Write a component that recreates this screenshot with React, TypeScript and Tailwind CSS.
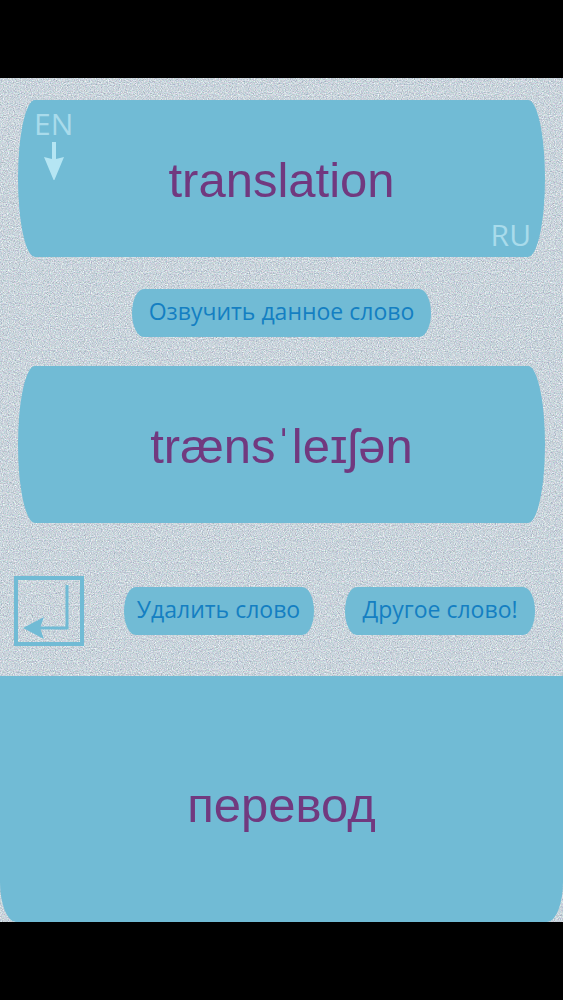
import type { ReactNode } from "react";

const word = {
  source: "translation",
  phonetic: "trænsˈleɪʃən",
  target: "перевод",
};

function Fabric() {
  return (
    <svg className="absolute inset-0 h-full w-full" aria-hidden="true">
      <filter id="weave" x="0" y="0" width="100%" height="100%" colorInterpolationFilters="sRGB">
        <feTurbulence type="fractalNoise" baseFrequency="0.83 0.91" numOctaves="2" seed="4" />
        <feColorMatrix
          values="0.42 0.18 0 0 0.49
                  0.22 0.36 0 0 0.54
                  0.22 0.2 0.14 0 0.58
                  0 0 0 0 1"
        />
      </filter>
      <rect width="100%" height="100%" filter="url(#weave)" />
    </svg>
  );
}

function WordCard({ children }: { children: ReactNode }) {
  return (
    <section className="relative mx-[18px] flex h-[157px] items-center justify-center rounded-[17px/50%] bg-[#71bbd5] pt-0.5">
      {children}
    </section>
  );
}

function WordText({ children }: { children: ReactNode }) {
  return (
    <p className="font-['Liberation_Sans',Arial,sans-serif] text-[49px] leading-[60px] text-[#71397f]">
      {children}
    </p>
  );
}

function ActionButton({ className, children }: { className: string; children: ReactNode }) {
  return (
    <button
      type="button"
      className={`flex h-12 items-center justify-center rounded-[12px/24px] bg-[#71bbd5] pb-1 font-['Open_Sans','Noto_Sans',sans-serif] text-[23px] leading-8 whitespace-nowrap text-[#147fc2] ${className}`}
    >
      {children}
    </button>
  );
}

export default function App() {
  return (
    <div className="flex min-h-screen flex-col bg-black py-[78px]">
      <main className="relative flex flex-1 flex-col overflow-hidden bg-[#ced5dc]">
        <Fabric />
        <div className="relative flex flex-1 flex-col pt-[22px]">
          <WordCard>
            <div className="absolute top-2 left-4 flex flex-col items-center font-['Open_Sans','Noto_Sans',sans-serif] text-[30px] leading-8 text-[#a9dbeb]">
              <span>EN</span>
              <svg className="h-10 w-5" viewBox="0 0 20 40" fill="#b5e5f3" aria-hidden="true">
                <path d="M8 2h4v17l8-2-10 24L0 17l8 2z" />
              </svg>
            </div>
            <WordText>{word.source}</WordText>
            <span className="absolute right-[14px] bottom-1 font-['Open_Sans','Noto_Sans',sans-serif] text-[30px] leading-9 text-[#a9dbeb]">
              RU
            </span>
          </WordCard>

          <ActionButton className="mx-auto mt-8 w-[299px]">Озвучить данное слово</ActionButton>

          <div className="mt-[29px]">
            <WordCard>
              <WordText>{word.phonetic}</WordText>
            </WordCard>
          </div>

          <div className="mt-[53px] flex items-center justify-between pr-7 pl-[14px]">
            <button type="button" aria-label="Назад" className="size-[70px] border-4 border-[#71bbd5]">
              <svg className="size-full" viewBox="0 0 62 62" aria-hidden="true">
                <path d="M49 5v43H20" fill="none" stroke="#71bbd5" strokeWidth="3" />
                <path d="M5 48l21-11-4 11 4 11z" fill="#71bbd5" />
              </svg>
            </button>
            <ActionButton className="ml-2 w-[190px]">Удалить слово</ActionButton>
            <ActionButton className="w-[190px]">Другое слово!</ActionButton>
          </div>

          <section className="mt-[30px] flex flex-1 items-center justify-center rounded-[0_0_16px_16px/0_0_40px_40px] bg-[#71bbd5] pt-3">
            <WordText>{word.target}</WordText>
          </section>
        </div>
      </main>
    </div>
  );
}
